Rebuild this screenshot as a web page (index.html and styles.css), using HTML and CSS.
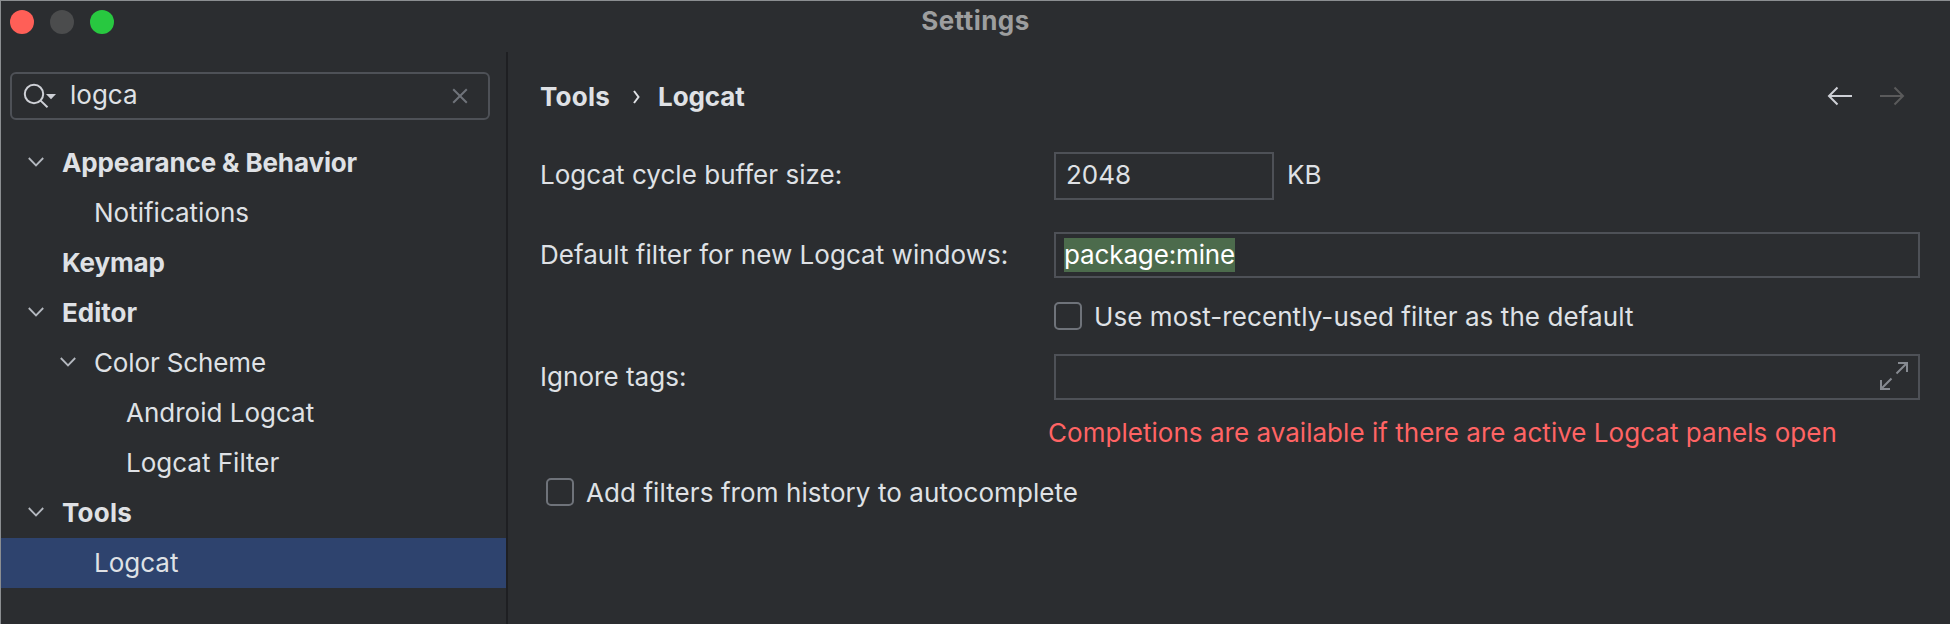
FILE: index.html
```
<!DOCTYPE html>
<html lang="en">
<head>
<meta charset="utf-8">
<title>Settings</title>
<link rel="stylesheet" href="styles.css">
</head>
<body>
<div class="window">
  <header class="titlebar">
    <div class="lights"><span class="light close"></span><span class="light minimize"></span><span class="light zoom"></span></div>
    <h1 class="title">Settings</h1>
  </header>
  <div class="body">
    <aside class="sidebar">
      <div class="search">
        <svg class="search-icon" width="34" height="26" viewBox="0 0 34 26"><circle cx="11" cy="11" r="9.2"/><path d="M17.6 17.6 24.5 24.3"/><path class="solid" d="M23 11H33L28 16.2Z"/></svg>
        <span class="search-text">logca</span>
        <svg class="clear" width="16" height="16" viewBox="0 0 16 16"><path d="M1.2 1.2 14.8 14.8M14.8 1.2 1.2 14.8"/></svg>
      </div>
      <ul class="tree">
        <li class="row bold"><svg class="chevron" viewBox="0 0 16 10"><path d="M.8 1 8 8.4 15.2 1"/></svg><span class="tight">Appearance &amp; Behavior</span></li>
        <li class="row level-2"><span>Notifications</span></li>
        <li class="row bold leaf"><span class="tight">Keymap</span></li>
        <li class="row bold"><svg class="chevron" viewBox="0 0 16 10"><path d="M.8 1 8 8.4 15.2 1"/></svg><span>Editor</span></li>
        <li class="row nested"><svg class="chevron" viewBox="0 0 16 10"><path d="M.8 1 8 8.4 15.2 1"/></svg><span class="tight">Color Scheme</span></li>
        <li class="row level-3"><span>Android Logcat</span></li>
        <li class="row level-3"><span>Logcat Filter</span></li>
        <li class="row bold"><svg class="chevron" viewBox="0 0 16 10"><path d="M.8 1 8 8.4 15.2 1"/></svg><span class="loose">Tools</span></li>
        <li class="row level-2 selected"><span>Logcat</span></li>
      </ul>
    </aside>
    <main class="content">
      <div class="heading">
        <nav class="crumbs"><span class="loose">Tools</span><svg class="crumb-sep" width="7" height="14" viewBox="0 0 7 14"><path d="M1 1 5.5 7 1 13"/></svg><span class="tight">Logcat</span></nav>
        <div class="history">
          <svg width="26" height="20" viewBox="0 0 26 20"><path d="M25 10H2M10.5 1.5 2 10 10.5 18.5"/></svg>
          <svg class="disabled" width="26" height="20" viewBox="0 0 26 20"><path d="M1 10H24M15.5 1.5 24 10 15.5 18.5"/></svg>
        </div>
      </div>
      <div class="form">
        <label class="label">Logcat cycle buffer size:</label>
        <div class="buffer"><div class="field field-size">2048</div><span class="unit">KB</span></div>
        <label class="label">Default filter for new Logcat windows:</label>
        <div class="field field-filter"><span class="selection tight">package:mine</span></div>
        <div class="check recent"><span class="box"></span><span class="check-text">Use most-recently-used filter as the default</span></div>
        <label class="label">Ignore tags:</label>
        <div class="field field-tags"><svg width="28" height="28" viewBox="0 0 28 28"><path d="M18 1H27V10M27 1 16.5 11.5M1 18V27H10M1 27 11.5 16.5"/></svg></div>
        <p class="warning">Completions are available if there are active Logcat panels open</p>
      </div>
      <div class="check history-check"><span class="box"></span><span class="check-text">Add filters from history to autocomplete</span></div>
    </main>
  </div>
</div>
</body>
</html>
```
FILE: styles.css
```
* { box-sizing: border-box; }

body {
  margin: 0;
  background: #2b2d30;
  color: #dfe1e5;
  font: 400 26px/31px Inter, "Liberation Sans", sans-serif;
  white-space: nowrap;
}

svg {
  display: block;
  flex: none;
  fill: none;
  stroke: #ced0d6;
  stroke-width: 2;
}

.tight { letter-spacing: -0.13px; }
.loose { letter-spacing: 0.25px; }

.window {
  display: flex;
  flex-direction: column;
  width: 1950px;
  height: 624px;
  overflow: hidden;
  border-top: 1px solid #8b8e91;
  border-left: 1px solid #8b8e91;
}

.titlebar {
  display: grid;
  grid-template-columns: 1fr auto 1fr;
  height: 51px;
  flex: none;
}

.lights { display: flex; gap: 16px; padding: 9px 0 0 9px; }
.light { width: 24px; height: 24px; border-radius: 50%; }
.close { background: #ff5f57; }
.minimize { background: #4b4c4d; }
.zoom { background: #28c840; }

.title {
  margin: 4px 0 0;
  font-size: 26px;
  font-weight: 700;
  letter-spacing: 0.45px;
  color: #9d9e9f;
}

.body { display: flex; flex: 1; min-height: 0; }

.sidebar {
  width: 507px;
  flex: none;
  padding-top: 20px;
  border-right: 2px solid #1e1f22;
}

.search {
  display: flex;
  align-items: flex-start;
  width: 480px;
  height: 48px;
  margin-left: 9px;
  padding: 5px 20px 0 11px;
  border: 2px solid #4e5157;
  border-radius: 6px;
}

.search-icon { margin-top: 4px; }
.search-icon .solid { fill: #ced0d6; stroke: none; }
.search-text { flex: 1; margin-left: 13px; }
.clear { margin-top: 9px; stroke: #6f737a; }

.tree { margin: 18px 0 0; padding: 0; list-style: none; }
.row { display: flex; height: 50px; padding: 9px 0 0 27px; }
.bold { font-weight: 700; }
.leaf { padding-left: 61px; }
.nested { padding-left: 59px; }
.level-2 { padding-left: 93px; }
.level-3 { padding-left: 125px; }
.selected { background: #2e436e; }
.chevron { width: 16px; height: 10px; margin: 10px 18px 0 0; stroke: #b4b8bf; stroke-width: 1.8; }

.content { flex: 1; min-width: 0; padding: 29px 30px 0 32px; }

.heading { display: flex; justify-content: space-between; height: 71px; padding-right: 15px; }
.crumbs { display: flex; font-weight: 700; }
.crumb-sep { margin: 9px 18px 0 23px; stroke: #dfe1e5; }
.history { display: flex; gap: 26px; padding-top: 5px; }
.history .disabled { stroke: #5a5a5b; }

.form {
  display: grid;
  grid-template-columns: 514px 866px;
  grid-template-rows: 80px 70px 52px 66px;
}

.label { padding-top: 7px; letter-spacing: 0.03px; }
.field { border: 2px solid #4e5157; }
.buffer { display: flex; gap: 13px; }
.field-size { width: 220px; height: 48px; padding: 5px 0 0 10px; }
.unit { padding-top: 7px; }
.field-filter { height: 46px; padding: 4px 8px 0; }
.selection { display: block; width: 171px; height: 34px; padding-top: 1px; background: #4c6b4c; color: #fff; }
.check { display: flex; gap: 12px; }
.box { width: 28px; height: 28px; border: 2px solid #6f737a; border-radius: 5px; }
.check-text { margin-top: -1px; letter-spacing: 0.08px; }
.recent { grid-column: 2; }
.field-tags { display: flex; justify-content: flex-end; height: 46px; padding: 6px 10px 0 0; }
.field-tags svg { stroke: #868a91; }
.warning { grid-column: 2; margin: -3px 0 0 -6px; letter-spacing: 0.03px; color: #ff6464; }
.history-check { margin: 30px 0 0 6px; }
```
